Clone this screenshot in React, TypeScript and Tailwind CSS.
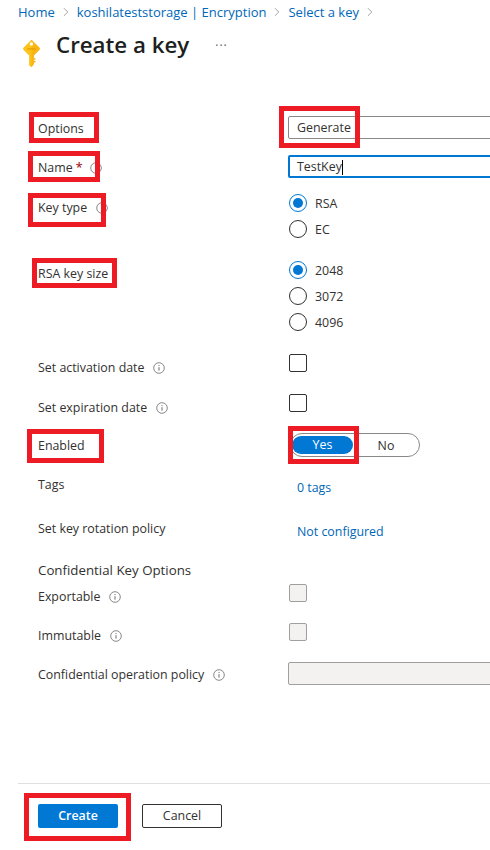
import React from 'react';
import { ChevronRight } from 'lucide-react';

const InfoIcon = ({ className = '' }: { className?: string }) => (
  <svg viewBox="0 0 12 12" className={`w-3 h-3 shrink-0 text-[#6b6b6b] ${className}`} fill="none" stroke="currentColor">
    <circle cx="6" cy="6" r="5.3" strokeWidth="0.8" />
    <path d="M6 5.2v3.4" strokeWidth="1" />
    <circle cx="6" cy="3.6" r="0.6" fill="currentColor" stroke="none" />
  </svg>
);

const KeyIcon = () => (
  <svg viewBox="0 0 20 30" className="w-[19px] h-[29px]">
    <path d="M10 0.5 L18.5 9 Q19.3 10 18.5 11 L12.5 17 V26 L10.5 29 Q10 29.6 9.2 29 L7.5 27 V17 L1.5 11 Q0.7 10 1.5 9 Z" fill="#fcc419" />
    <path d="M10 0.5 L18.5 9 Q19.3 10 18.5 11 L12.5 17 V26 L10.5 29 L10 29.3 Z" fill="#f5a90f" opacity="0.55" />
    <circle cx="10" cy="5" r="1.8" fill="#fff" />
    <rect x="5.5" y="9.5" width="9" height="1.4" fill="#e9a008" />
    <path d="M12.5 20h1.6v1.6h-1.6zM12.5 23h1.6v1.6h-1.6z" fill="#f5a90f" />
  </svg>
);

const Radio = ({ label, checked = false }: { label: string; checked?: boolean }) => (
  <div className="flex items-center gap-[8px] h-[18px]">
    {checked ? (
      <span className="w-[18px] h-[18px] rounded-full border border-[#0078d4] flex items-center justify-center">
        <span className="w-[10px] h-[10px] rounded-full bg-[#0078d4]" />
      </span>
    ) : (
      <span className="w-[18px] h-[18px] rounded-full border border-[#323130]" />
    )}
    <span className="pt-[2px]">{label}</span>
  </div>
);

const Checkbox = ({ disabled = false }: { disabled?: boolean }) => (
  <span
    className={`block ml-px w-[18px] h-[18px] rounded-[2px] border ${
      disabled ? 'bg-[#f3f2f1] border-[#a19f9d]' : 'bg-white border-[#323130]'
    }`}
  />
);

const Row = ({ className, labelClass, controlClass = '', label, children }: {
  className: string;
  labelClass: string;
  controlClass?: string;
  label: React.ReactNode;
  children: React.ReactNode;
}) => (
  <div className={`grid grid-cols-[250px_1fr] items-start ${className}`}>
    <div className={`flex items-center ${labelClass}`}>{label}</div>
    <div className={controlClass}>{children}</div>
  </div>
);

const Marker = ({ className }: { className: string }) => (
  <div className={`absolute border-[5px] border-[#ed1c24] ${className}`} />
);

export default function App() {
  return (
    <div
      className="relative w-[490px] h-[850px] overflow-hidden bg-white text-[#323130] text-[12.4px] leading-5"
      style={{ fontFamily: '"Open Sans", "Noto Sans", sans-serif' }}
    >
      {/* Breadcrumb */}
      <div className="h-[24px] pl-[18px] flex items-center text-[#0067b8] text-[13px]">
        <span>Home</span>
        <ChevronRight className="w-[14px] h-[14px] mx-[4px] text-[#605e5c]" strokeWidth={1} />
        <span>koshilateststorage | Encryption</span>
        <ChevronRight className="w-[14px] h-[14px] mx-[4px] text-[#605e5c]" strokeWidth={1} />
        <span>Select a key</span>
        <ChevronRight className="w-[14px] h-[14px] mx-[4px] text-[#605e5c]" strokeWidth={1} />
      </div>

      {/* Title */}
      <div className="h-[92px] pl-[22px] flex items-start">
        <div className="mt-[15px] w-[34px]">
          <KeyIcon />
        </div>
        <h1 className="mt-[4px] text-[22.3px] leading-[34px] font-semibold text-[#201f1e]">Create a key</h1>
        <span className="ml-[26px] mt-[12px] text-[12px] tracking-[1px] text-[#605e5c]">···</span>
      </div>

      {/* Form */}
      <div className="pl-[38px]">
        <Row label="Options" labelClass="pt-[3px]" className="">
          <div className="h-[23px] w-[240px] border border-[#8a8886] rounded-[2px] pl-[8px] pt-[1px] flex items-center">Generate</div>
        </Row>

        <Row
          className="mt-[16px]"
          labelClass="pt-[3px]"
          label={
            <>
              Name <span className="text-[#a4262c] font-semibold ml-[3px]">*</span>
              <InfoIcon className="ml-[8px]" />
            </>
          }
        >
          <div className="h-[23px] w-[240px] border-2 border-[#0078d4] rounded-[2px] pl-[7px] pt-[1px] flex items-center">
            TestKey<span className="w-px h-[15px] bg-black" />
          </div>
        </Row>

        <Row
          className="mt-[16px]"
          labelClass="pt-[4px]"
          controlClass="flex flex-col gap-[8px] pl-px"
          label={
            <>
              Key type
              <InfoIcon className="ml-[9px]" />
            </>
          }
        >
          <Radio label="RSA" checked />
          <Radio label="EC" />
        </Row>

        <Row className="mt-[23px]" labelClass="pt-[3px]" controlClass="flex flex-col gap-[8px] pl-px" label="RSA key size">
          <Radio label="2048" checked />
          <Radio label="3072" />
          <Radio label="4096" />
        </Row>

        <Row
          className="mt-[23px] h-[18px]"
          labelClass="pt-[4px]"
          label={
            <>
              Set activation date
              <InfoIcon className="ml-[9px]" />
            </>
          }
        >
          <Checkbox />
        </Row>

        <Row
          className="mt-[22px] h-[18px]"
          labelClass="pt-[4px]"
          label={
            <>
              Set expiration date
              <InfoIcon className="ml-[9px]" />
            </>
          }
        >
          <Checkbox />
        </Row>

        <Row className="mt-[21px] h-[24px]" labelClass="pt-[3px]" controlClass="pl-[2px]" label="Enabled">
          <div className="h-[24px] w-[130px] border border-[#8a8886] rounded-full flex items-center pl-[1px]">
            <span className="h-[18px] w-[61px] rounded-full bg-[#0078d4] text-white flex items-center justify-center">Yes</span>
            <span className="flex-1 text-center pt-[1px]">No</span>
          </div>
        </Row>

        <Row className="mt-[17px] h-[23px]" labelClass="pt-[1px]" controlClass="pt-[4px] pl-[9px] text-[#0067b8]" label="Tags">
          0 tags
        </Row>

        <Row className="mt-[21px] h-[23px]" labelClass="pt-[1px]" controlClass="pt-[4px] pl-[9px] text-[#0067b8]" label="Set key rotation policy">
          Not configured
        </Row>

        <div className="mt-[19px] h-5 text-[13.3px]">Confidential Key Options</div>

        <Row
          className="mt-[4px] h-[18px]"
          labelClass="pt-[3px]"
          label={
            <>
              Exportable
              <InfoIcon className="ml-[9px]" />
            </>
          }
        >
          <Checkbox disabled />
        </Row>

        <Row
          className="mt-[21px] h-[18px]"
          labelClass="pt-[3px]"
          label={
            <>
              Immutable
              <InfoIcon className="ml-[9px]" />
            </>
          }
        >
          <Checkbox disabled />
        </Row>

        <Row
          className="mt-[21px] h-[23px]"
          labelClass="pt-[3px]"
          label={
            <>
              Confidential operation policy
              <InfoIcon className="ml-[9px]" />
            </>
          }
        >
          <div className="h-[23px] w-[240px] bg-[#f3f2f1] border border-[#a19f9d] rounded-[2px]" />
        </Row>
      </div>

      {/* Footer */}
      <div className="ml-[18px] mt-[98px] border-t border-[#e1dfdd] pt-[20px] pl-[20px] flex gap-[24px]">
        <button className="w-[80px] h-[24px] bg-[#0078d4] rounded-[2px] text-white font-semibold flex items-center justify-center">Create</button>
        <button className="w-[80px] h-[24px] border border-[#323130] rounded-[2px] flex items-center justify-center">Cancel</button>
      </div>

      {/* Red annotation boxes */}
      <Marker className="left-[29px] top-[112px] w-[70px] h-[31px]" />
      <Marker className="left-[28px] top-[151px] w-[72px] h-[31px]" />
      <Marker className="left-[28px] top-[193px] w-[78px] h-[34px]" />
      <Marker className="left-[32px] top-[258px] w-[85px] h-[30px]" />
      <Marker className="left-[27px] top-[429px] w-[77px] h-[34px]" />
      <Marker className="left-[279px] top-[106px] w-[81px] h-[42px]" />
      <Marker className="left-[288px] top-[426px] w-[71px] h-[38px]" />
      <Marker className="left-[24px] top-[793px] w-[107px] h-[48px]" />
    </div>
  );
}
